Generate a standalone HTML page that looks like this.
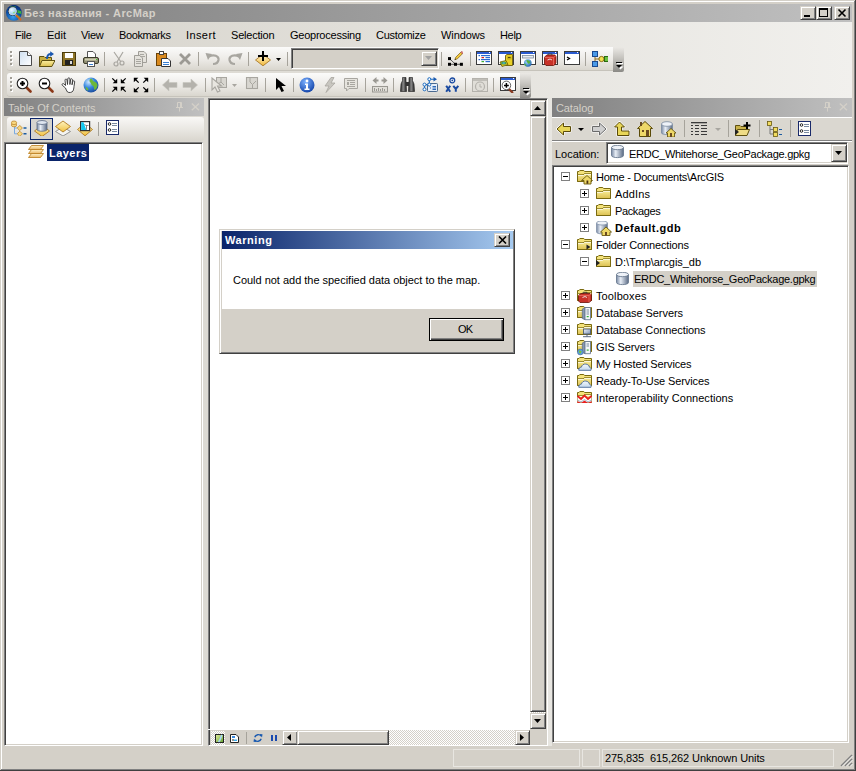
<!DOCTYPE html><html><head><meta charset="utf-8"><style>
*{margin:0;padding:0;box-sizing:border-box}
html,body{width:856px;height:771px;overflow:hidden;background:#d4d0c8;font-family:"Liberation Sans",sans-serif;font-size:11px;color:#000}
div,svg{position:absolute}
.t{white-space:nowrap;line-height:13px}
</style></head><body><svg style="left:0;top:0" width="0" height="0"><defs><linearGradient id="gfold" x1="0" y1="0" x2="0" y2="1"><stop offset="0" stop-color="#f8ec98"/><stop offset="1" stop-color="#dcc050"/></linearGradient><linearGradient id="gcyl" x1="0" x2="1"><stop offset="0" stop-color="#7a8aa4"/><stop offset="0.35" stop-color="#e8eef6"/><stop offset="1" stop-color="#5a6a84"/></linearGradient></defs></svg>
<div style="left:1px;top:1px;width:854px;height:1px;background:#fff"></div>
<div style="left:1px;top:1px;width:1px;height:768px;background:#fff"></div>
<div style="left:854px;top:1px;width:1px;height:769px;background:#808080"></div>
<div style="left:1px;top:769px;width:854px;height:1px;background:#808080"></div>
<div style="left:855px;top:0px;width:1px;height:771px;background:#404040"></div>
<div style="left:0px;top:770px;width:856px;height:1px;background:#404040"></div>
<div style="left:4px;top:22px;width:848px;height:724px;background:linear-gradient(to right,#d6d3cb,#f1f0ed)"></div>
<div style="left:4px;top:4px;width:848px;height:18px;background:linear-gradient(to right,#808080,#c0c0c0)"></div>
<svg style="left:6px;top:5px" width="16" height="16" viewBox="0 0 16 16"><defs><radialGradient id="gapp" cx="0.45" cy="0.75" r="0.75"><stop offset="0" stop-color="#3aa0f0"/><stop offset="0.6" stop-color="#0a50a8"/><stop offset="1" stop-color="#082a70"/></radialGradient><radialGradient id="glens" cx="0.35" cy="0.35" r="0.7"><stop offset="0" stop-color="#f0faff"/><stop offset="1" stop-color="#7ac0ee"/></radialGradient></defs><circle cx="7.9" cy="7.8" r="7.9" fill="url(#gapp)"/><path d="M11 5L15 6L15.5 9L11.5 8Z M10 10L14 11L13 13L10 12Z M4 1.5L10 1.5L9 2.5L5 2.5Z" fill="#38b040"/><circle cx="6.7" cy="6.2" r="4.6" fill="#1a2030"/><circle cx="6.7" cy="6.2" r="3.8" fill="url(#glens)" stroke="#e0e4e8" stroke-width="0.8"/><path d="M7 8L9 7" stroke="#9ae060" stroke-width="1"/><path d="M9.6 9.6L10.2 10.2" stroke="#eee" stroke-width="1.4"/><path d="M10.5 10.5L14.5 14.5" stroke="#d06a20" stroke-width="1.8" stroke-linecap="round"/></svg>
<div class="t" style="left:24px;top:7px;font-weight:bold;color:#d4d0c8;letter-spacing:0.391px">Без названия - ArcMap</div>
<div style="left:800px;top:6px;width:16px;height:14px;background:#d4d0c8;border-top:1px solid #d4d0c8;border-left:1px solid #d4d0c8;border-right:1px solid #404040;border-bottom:1px solid #404040;box-shadow:inset 1px 1px 0 #fff,inset -1px -1px 0 #808080"></div>
<div style="left:816px;top:6px;width:16px;height:14px;background:#d4d0c8;border-top:1px solid #d4d0c8;border-left:1px solid #d4d0c8;border-right:1px solid #404040;border-bottom:1px solid #404040;box-shadow:inset 1px 1px 0 #fff,inset -1px -1px 0 #808080"></div>
<div style="left:834px;top:6px;width:16px;height:14px;background:#d4d0c8;border-top:1px solid #d4d0c8;border-left:1px solid #d4d0c8;border-right:1px solid #404040;border-bottom:1px solid #404040;box-shadow:inset 1px 1px 0 #fff,inset -1px -1px 0 #808080"></div>
<div style="left:804px;top:15px;width:6px;height:2px;background:#000"></div>
<div style="left:819px;top:8px;width:9px;height:9px;border:1px solid #000;border-top-width:2px"></div>
<svg style="left:837px;top:8px" width="10" height="10"><path d="M1.5 1.5L8.5 8.5M8.5 1.5L1.5 8.5" stroke="#000" stroke-width="1.6"/></svg>
<div class="t" style="left:15px;top:29px;;letter-spacing:-0.296px">File</div>
<div class="t" style="left:47px;top:29px;;letter-spacing:0.009px">Edit</div>
<div class="t" style="left:81px;top:29px;;letter-spacing:-0.302px">View</div>
<div class="t" style="left:119px;top:29px;;letter-spacing:-0.392px">Bookmarks</div>
<div class="t" style="left:186px;top:29px;;letter-spacing:0.397px">Insert</div>
<div class="t" style="left:231px;top:29px;;letter-spacing:-0.208px">Selection</div>
<div class="t" style="left:290px;top:29px;;letter-spacing:-0.240px">Geoprocessing</div>
<div class="t" style="left:376px;top:29px;;letter-spacing:-0.255px">Customize</div>
<div class="t" style="left:441px;top:29px;;letter-spacing:-0.096px">Windows</div>
<div class="t" style="left:500px;top:29px;;letter-spacing:-0.321px">Help</div>
<div style="left:7px;top:47px;width:617px;height:23px;border-radius:3px;background:linear-gradient(#fbfbfa,#eceae6 55%,#d9d6ce);box-shadow:0 1px 0 #c6c3bb"></div>
<div style="left:10px;top:51px;width:2px;height:2px;background:#a09d95;box-shadow:1px 1px 0 #fff"></div>
<div style="left:10px;top:55px;width:2px;height:2px;background:#a09d95;box-shadow:1px 1px 0 #fff"></div>
<div style="left:10px;top:59px;width:2px;height:2px;background:#a09d95;box-shadow:1px 1px 0 #fff"></div>
<div style="left:10px;top:63px;width:2px;height:2px;background:#a09d95;box-shadow:1px 1px 0 #fff"></div>
<div style="left:613px;top:47px;width:11px;height:25px;border-radius:0 1px 2px 0;background:linear-gradient(#ebe9e5,#c4c2bd 45%,#8a8985)"></div>
<div style="left:616px;top:62px;width:6px;height:1px;background:#000;box-shadow:1px 1px 0 #fff"></div>
<svg style="left:616px;top:65px" width="8" height="5"><path d="M1.5 1.5H7.5L4.5 4.5Z" fill="#fff"/><path d="M0 0H6L3 3Z" fill="#000"/></svg>
<div style="left:7px;top:73px;width:524px;height:23px;border-radius:3px;background:linear-gradient(#fbfbfa,#eceae6 55%,#d9d6ce);box-shadow:0 1px 0 #c6c3bb"></div>
<div style="left:10px;top:77px;width:2px;height:2px;background:#a09d95;box-shadow:1px 1px 0 #fff"></div>
<div style="left:10px;top:81px;width:2px;height:2px;background:#a09d95;box-shadow:1px 1px 0 #fff"></div>
<div style="left:10px;top:85px;width:2px;height:2px;background:#a09d95;box-shadow:1px 1px 0 #fff"></div>
<div style="left:10px;top:89px;width:2px;height:2px;background:#a09d95;box-shadow:1px 1px 0 #fff"></div>
<div style="left:520px;top:73px;width:11px;height:25px;border-radius:0 1px 2px 0;background:linear-gradient(#ebe9e5,#c4c2bd 45%,#8a8985)"></div>
<div style="left:523px;top:88px;width:6px;height:1px;background:#000;box-shadow:1px 1px 0 #fff"></div>
<svg style="left:523px;top:91px" width="8" height="5"><path d="M1.5 1.5H7.5L4.5 4.5Z" fill="#fff"/><path d="M0 0H6L3 3Z" fill="#000"/></svg>
<div style="left:104px;top:52px;width:1px;height:14px;background:#a6a39b"></div>
<div style="left:198px;top:52px;width:1px;height:14px;background:#a6a39b"></div>
<div style="left:248px;top:52px;width:1px;height:14px;background:#a6a39b"></div>
<div style="left:287px;top:52px;width:1px;height:14px;background:#a6a39b"></div>
<div style="left:441px;top:52px;width:1px;height:14px;background:#a6a39b"></div>
<div style="left:470px;top:52px;width:1px;height:14px;background:#a6a39b"></div>
<div style="left:585px;top:52px;width:1px;height:14px;background:#a6a39b"></div>
<div style="left:104px;top:78px;width:1px;height:14px;background:#a6a39b"></div>
<div style="left:154px;top:78px;width:1px;height:14px;background:#a6a39b"></div>
<div style="left:205px;top:78px;width:1px;height:14px;background:#a6a39b"></div>
<div style="left:265px;top:78px;width:1px;height:14px;background:#a6a39b"></div>
<div style="left:293px;top:78px;width:1px;height:14px;background:#a6a39b"></div>
<div style="left:365px;top:78px;width:1px;height:14px;background:#a6a39b"></div>
<div style="left:393px;top:78px;width:1px;height:14px;background:#a6a39b"></div>
<div style="left:465px;top:78px;width:1px;height:14px;background:#a6a39b"></div>
<div style="left:493px;top:78px;width:1px;height:14px;background:#a6a39b"></div>
<svg style="left:17px;top:51px" width="16" height="16" viewBox="0 0 16 16"><defs><linearGradient id="gnew" x1="0" y1="0" x2="1" y2="1"><stop offset="0" stop-color="#cfe0f2"/><stop offset="1" stop-color="#fff"/></linearGradient></defs>
<path d="M2.5 0.5H10.5L14.5 4.5V14.5H2.5Z" fill="url(#gnew)" stroke="#4a4a4a"/><path d="M10.5 0.5V4.5H14.5" fill="#fff" stroke="#4a4a4a"/></svg>
<svg style="left:39px;top:51px" width="16" height="16" viewBox="0 0 16 16"><defs><linearGradient id="gopen" x1="0" y1="0" x2="0" y2="1"><stop offset="0" stop-color="#fbeea0"/><stop offset="1" stop-color="#dcc050"/></linearGradient></defs><path d="M0.5 5.5H5L6 6.5H12.5V15.5H0.5Z" fill="#c8ae40" stroke="#5e5010"/>
<path d="M0.5 15.5L3 9.5H16L12.8 15.5Z" fill="url(#gopen)" stroke="#5e5010"/>
<path d="M8 8C8 4.5 9.5 3 12 3" stroke="#1a58b0" stroke-width="1.8" fill="none"/><path d="M11.2 0.2L15 3L11.2 5.8Z" fill="#1a58b0"/></svg>
<svg style="left:61px;top:51px" width="16" height="16" viewBox="0 0 16 16"><rect x="1.5" y="1.5" width="13" height="13" fill="#8e7428" stroke="#4a3b0a"/>
<rect x="4" y="2" width="8" height="5" fill="#fff"/><rect x="4" y="9" width="8" height="5" fill="#222"/><rect x="9" y="10" width="2" height="3" fill="#ddd"/></svg>
<svg style="left:83px;top:51px" width="16" height="16" viewBox="0 0 16 16"><path d="M4.5 0.5H10L12.5 3V7.5H4.5Z" fill="#fff" stroke="#555"/>
<rect x="0.5" y="6.5" width="15" height="6" rx="1.5" fill="#8f8d70" stroke="#3d3c2c"/><rect x="2" y="7.5" width="12" height="2" fill="#cfcdb0"/>
<rect x="4.5" y="10.5" width="7" height="5" fill="#fff" stroke="#555"/><rect x="6" y="13" width="4" height="1" fill="#3a7fd0"/><rect x="13" y="8" width="1" height="1" fill="#3c3"/></svg>
<svg style="left:111px;top:51px" width="16" height="16" viewBox="0 0 16 16"><g stroke="#a8a6a0" fill="none" stroke-width="1.2"><path d="M3 1L10 11M12 1L6 11"/><circle cx="5" cy="13" r="2"/><circle cx="11" cy="12" r="2"/></g></svg>
<svg style="left:133px;top:51px" width="16" height="16" viewBox="0 0 16 16"><g fill="#e4e2dc" stroke="#a09e98"><path d="M5.5 0.5H11L13.5 3V11.5H5.5Z"/><path d="M1.5 4.5H7L9.5 7V15.5H1.5Z"/></g><path d="M7 3.5H11M7 5.5H12M3 8.5H8M3 10.5H8M3 12.5H8" stroke="#a8a6a0"/></svg>
<svg style="left:155px;top:51px" width="16" height="16" viewBox="0 0 16 16"><rect x="1.5" y="2.5" width="10" height="12" fill="#d98a1f" stroke="#6a4208"/><rect x="4.5" y="0.5" width="4" height="3" fill="#fff" stroke="#444"/>
<path d="M6.5 7.5H13L15.5 10V15.5H6.5Z" fill="#fff" stroke="#333"/><rect x="8" y="11" width="2" height="1" fill="#3a7fd0"/><rect x="10" y="11" width="4" height="1" fill="#3a7fd0"/><rect x="8" y="13" width="6" height="1" fill="#3a7fd0"/></svg>
<svg style="left:177px;top:51px" width="16" height="16" viewBox="0 0 16 16"><path d="M3 3L13 13M13 3L3 13" stroke="#9c9a94" stroke-width="2.8"/></svg>
<svg style="left:205px;top:51px" width="16" height="16" viewBox="0 0 16 16"><path d="M4 5.5C9 3 14 5 13.5 9C13 12 10 13 8 13" stroke="#a8a6a0" stroke-width="2.2" fill="none"/><path d="M0.5 2L7 3L3 9Z" fill="#a8a6a0"/></svg>
<svg style="left:227px;top:51px" width="16" height="16" viewBox="0 0 16 16"><path d="M12 5.5C7 3 2 5 2.5 9C3 12 6 13 8 13" stroke="#a8a6a0" stroke-width="2.2" fill="none"/><path d="M15.5 2L9 3L13 9Z" fill="#a8a6a0"/></svg>
<svg style="left:255px;top:51px" width="16" height="16" viewBox="0 0 16 16"><defs><linearGradient id="gad" x1="0" y1="0" x2="0" y2="1"><stop offset="0" stop-color="#fff6d8"/><stop offset="1" stop-color="#f0b838"/></linearGradient></defs>
<path d="M8 3.2L15.5 9L8 14.8L0.5 9Z" fill="url(#gad)" stroke="#a8782a" stroke-width="0.9"/><path d="M8 0V10M3 5H13" stroke="#000" stroke-width="2"/></svg>
<svg style="left:447px;top:51px" width="16" height="16" viewBox="0 0 16 16"><path d="M2.5 7.6L8.5 13.3M2.5 13.3H14.4" stroke="#333" stroke-width="0.8" fill="none"/><g fill="#000"><rect x="1" y="6.1" width="3" height="3"/><rect x="1" y="11.8" width="3" height="3"/><rect x="7" y="11.8" width="3" height="3"/><rect x="12.9" y="11.8" width="3" height="3"/></g><path d="M7.8 8.8L8.8 6.2L13.8 1.2L15.4 2.8L10.4 7.8Z" fill="#f2c83a" stroke="#7a5a10" stroke-width="0.7"/><path d="M13.8 1.2L14.8 0.2L16.4 1.8L15.4 2.8Z" fill="#e88080" stroke="#a04040" stroke-width="0.5"/><path d="M7.8 8.8L8.3 7.5L9.1 8.3Z" fill="#222"/></svg>
<svg style="left:476px;top:51px" width="16" height="16" viewBox="0 0 16 16"><rect x="0.5" y="0.5" width="15" height="13" fill="#fff" stroke="#3c3c3c"/><rect x="1" y="1" width="14" height="2" fill="#2a5bd0"/><rect x="13" y="1" width="1" height="1" fill="#fff"/><g fill="#2a6ad0"><rect x="2.5" y="4" width="1.5" height="1.2"/><rect x="5" y="4" width="9" height="1.2"/><rect x="2.5" y="8" width="1.5" height="1.2"/><rect x="5" y="8" width="9" height="1.2"/><rect x="9.5" y="6" width="4.5" height="1.2"/><rect x="9.5" y="10" width="4.5" height="1.2"/></g><rect x="5.5" y="6" width="2.5" height="1.2" fill="#d82020"/><rect x="5.5" y="10" width="2.5" height="1.2" fill="#40b030"/></svg>
<svg style="left:498px;top:51px" width="16" height="16" viewBox="0 0 16 16"><rect x="0.5" y="0.5" width="15" height="13" fill="#fff" stroke="#3c3c3c"/><rect x="1" y="1" width="14" height="2" fill="#2a5bd0"/><rect x="13" y="1" width="1" height="1" fill="#fff"/><path d="M7.5 4.5L9 3.5H14.5V14.5H7.5Z" fill="#e8d028" stroke="#6a5a08" stroke-width="0.9"/><path d="M9 5.5H13.5V8.5H9Z" fill="#c8b018"/><path d="M10 6.5H12.5" stroke="#5a4a08"/><path d="M2 11L8 9.5L10 13.5L4 15.5Z" fill="#e0c820" stroke="#6a5a08" stroke-width="0.8"/><ellipse cx="5.8" cy="12" rx="2.8" ry="1.6" fill="#3a9a50"/><ellipse cx="5.8" cy="12" rx="1.5" ry="0.8" fill="#5ab0e0"/></svg>
<svg style="left:520px;top:51px" width="16" height="16" viewBox="0 0 16 16"><rect x="0.5" y="0.5" width="15" height="13" fill="#fff" stroke="#3c3c3c"/><rect x="1" y="1" width="14" height="2" fill="#2a5bd0"/><rect x="13" y="1" width="1" height="1" fill="#fff"/><rect x="2.5" y="4.5" width="11" height="2.5" fill="#e6ecf2" stroke="#7a8898" stroke-width="0.8"/><defs><radialGradient id="gsg" cx="0.4" cy="0.35" r="0.7"><stop offset="0" stop-color="#a0d8ff"/><stop offset="1" stop-color="#1a60b0"/></radialGradient></defs><circle cx="7.8" cy="12" r="3.8" fill="url(#gsg)"/><path d="M6.5 9C8 8.8 9.5 9.5 10.5 11C10 12.5 9 13 8 12.5C7.5 11.5 6 10.5 6.5 9Z M5 12.5C6 13 6.5 14 6.2 15.2C5 14.8 4.3 13.8 4.2 12.7Z" fill="#58b040"/></svg>
<svg style="left:542px;top:51px" width="16" height="16" viewBox="0 0 16 16"><rect x="0.5" y="0.5" width="15" height="13" fill="#fff" stroke="#3c3c3c"/><rect x="1" y="1" width="14" height="2" fill="#2a5bd0"/><rect x="13" y="1" width="1" height="1" fill="#fff"/><path d="M2.5 6L5 4H13L14 5.5V12L12 14.5H4L2.5 13Z" fill="#c83228" stroke="#6a1208" stroke-width="0.8"/><path d="M2.5 6.5H11.5L14 4.5M11.5 6.5V14.5" stroke="#f07a6a" stroke-width="0.7" fill="none"/><path d="M5.5 9L8 8L10 9" stroke="#eee" stroke-width="0.9" fill="none"/><path d="M6 4V3H10V4" stroke="#333" fill="none" stroke-width="0.8"/></svg>
<svg style="left:564px;top:51px" width="16" height="16" viewBox="0 0 16 16"><rect x="0.5" y="0.5" width="15" height="13" fill="#fff" stroke="#3c3c3c"/><rect x="1" y="1" width="14" height="2" fill="#2a5bd0"/><rect x="13" y="1" width="1" height="1" fill="#fff"/><path d="M3 6L5.5 7.5L3 9" stroke="#000" stroke-width="1.3" fill="none"/></svg>
<svg style="left:592px;top:51px" width="16" height="16" viewBox="0 0 16 16"><path d="M3 3V13M3 8H11" stroke="#8a6a20"/><rect x="0.5" y="0.5" width="5" height="5" fill="#4a9ae8" stroke="#1a4a90"/><rect x="0.5" y="10.5" width="5" height="5" fill="#4a9ae8" stroke="#1a4a90"/><circle cx="9.5" cy="8" r="2.6" fill="#f2e050" stroke="#8a6a10"/><rect x="12.5" y="5.5" width="4" height="5" fill="#6ac040" stroke="#2a6a10"/></svg>
<svg style="left:276px;top:58px" width="6" height="3"><path d="M0 0H5L2.5 3Z" fill="#000"/></svg>
<div style="left:291px;top:48px;width:148px;height:21px;background:#d4d0c8;border-top:1px solid #808080;border-left:1px solid #808080;border-right:1px solid #fff;border-bottom:1px solid #fff;box-shadow:inset 1px 1px 0 #404040,inset -1px -1px 0 #d4d0c8"></div>
<div style="left:421px;top:51px;width:16px;height:15px;background:#d4d0c8;border-top:1px solid #d4d0c8;border-left:1px solid #d4d0c8;border-right:1px solid #404040;border-bottom:1px solid #404040;box-shadow:inset 1px 1px 0 #fff,inset -1px -1px 0 #808080"></div>
<svg style="left:425px;top:56px" width="8" height="5"><path d="M0 0H7L3.5 4Z" fill="#a0a0a0"/></svg>
<svg style="left:16px;top:77px" width="16" height="16" viewBox="0 0 16 16"><path d="M10 10L14.5 14.5" stroke="#8a3818" stroke-width="2.6" stroke-linecap="round"/><circle cx="6.5" cy="6.5" r="5.3" fill="#fff" stroke="#222" stroke-width="1.1"/><path d="M4 6.5H9" stroke="#000" stroke-width="2"/><path d="M6.5 4V9" stroke="#000" stroke-width="2"/></svg>
<svg style="left:38px;top:77px" width="16" height="16" viewBox="0 0 16 16"><path d="M10 10L14.5 14.5" stroke="#8a3818" stroke-width="2.6" stroke-linecap="round"/><circle cx="6.5" cy="6.5" r="5.3" fill="#fff" stroke="#222" stroke-width="1.1"/><path d="M4 6.5H9" stroke="#000" stroke-width="2"/></svg>
<svg style="left:61px;top:77px" width="16" height="16" viewBox="0 0 16 16"><path d="M6.5 15C5.5 14 5 12 4.5 11L1.3 8.3C0.5 7.3 1.8 6 2.8 6.8L4.6 8.5L4 3.2C3.8 1.9 5.9 1.7 6 3L6.5 7.5L6.8 1.8C6.9 0.4 8.9 0.5 8.9 1.8L8.9 7.5L9.6 2.6C9.8 1.3 11.7 1.6 11.5 2.9L11 7.8L11.8 4.5C12.1 3.3 13.9 3.6 13.7 4.9L13 9.5C12.8 11.5 12.5 13 12 14C11 15.5 8 16 6.5 15Z" fill="#fff" stroke="#333" stroke-width="0.9" stroke-linejoin="round"/></svg>
<svg style="left:83px;top:77px" width="16" height="16" viewBox="0 0 16 16"><defs><radialGradient id="ggl" cx="0.35" cy="0.3" r="0.75"><stop offset="0" stop-color="#cfe8ff"/><stop offset="0.5" stop-color="#3a8ae0"/><stop offset="1" stop-color="#1a4a9a"/></radialGradient></defs>
<circle cx="8" cy="8" r="7.5" fill="url(#ggl)"/><path d="M8 1.5C10 2.5 9.5 4 11 4.5C12.5 5 14.5 6 14.5 8.5C14 11 13 12.5 11.5 13C10.5 11 11.5 9.5 9.5 8.5C8 8 8.5 6 7 5C6 4 6.5 2.5 8 1.5Z" fill="#6cb83a"/><path d="M2.5 10C4 10 5 11 5.5 13L4 13.5C3 12.5 2.5 11 2.5 10Z" fill="#6cb83a"/></svg>
<svg style="left:111px;top:77px" width="16" height="16" viewBox="0 0 16 16"><g stroke="#000" stroke-width="1.2"><path d="M1.3 1.3L4.5 4.5M14.7 1.3L11.5 4.5M1.3 14.7L4.5 11.5M14.7 14.7L11.5 11.5"/></g><g fill="#000"><path d="M6.2 6.2V1.7L1.7 6.2Z M6.2 6.2V3H5Z"/><path d="M9.8 6.2V1.7L14.3 6.2Z"/><path d="M6.2 9.8V14.3L1.7 9.8Z"/><path d="M9.8 9.8V14.3L14.3 9.8Z"/></g></svg>
<svg style="left:133px;top:77px" width="16" height="16" viewBox="0 0 16 16"><g stroke="#000" stroke-width="1.2"><path d="M5.7 5.7L2.5 2.5M10.3 5.7L13.5 2.5M5.7 10.3L2.5 13.5M10.3 10.3L13.5 13.5"/></g><g fill="#000"><path d="M0.8 0.8H5.3L0.8 5.3Z"/><path d="M15.2 0.8H10.7L15.2 5.3Z"/><path d="M0.8 15.2H5.3L0.8 10.7Z"/><path d="M15.2 15.2H10.7L15.2 10.7Z"/></g></svg>
<svg style="left:162px;top:77px" width="16" height="16" viewBox="0 0 16 16"><path d="M0.5 8L7 2V5.5H15V10.5H7V14Z" fill="#b4b2ac" stroke="#c8c6c0" stroke-width="0.6"/></svg>
<svg style="left:182px;top:77px" width="16" height="16" viewBox="0 0 16 16"><path d="M15.5 8L9 2V5.5H1V10.5H9V14Z" fill="#b4b2ac" stroke="#c8c6c0" stroke-width="0.6"/></svg>
<svg style="left:211px;top:77px" width="16" height="16" viewBox="0 0 16 16"><rect x="5.5" y="0.5" width="10" height="10" fill="#d8d6d0" stroke="#a8a6a0"/><path d="M10 1V5L13 8M10 5L7 7" stroke="#a8a6a0" fill="none"/><path d="M1 1L1 13L4 10L6.5 15L9 14L6.5 9H10.5Z" fill="#e8e6e0" stroke="#a8a6a0" stroke-width="1.1"/></svg>
<svg style="left:245px;top:77px" width="16" height="16" viewBox="0 0 16 16"><rect x="1.5" y="0.5" width="11" height="11" fill="#d8d6d0" stroke="#a8a6a0" stroke-width="1.1"/><path d="M5 1V5L7.5 7.5V11M7.5 7.5L11 4" stroke="#a8a6a0" fill="none"/></svg>
<svg style="left:273px;top:77px" width="16" height="16" viewBox="0 0 16 16"><path d="M3 1V13L6 10L8.5 15L11 14L8.5 9H13Z" fill="#000"/></svg>
<svg style="left:299px;top:77px" width="16" height="16" viewBox="0 0 16 16"><defs><radialGradient id="gid" cx="0.4" cy="0.3" r="0.8"><stop offset="0" stop-color="#7ab0ff"/><stop offset="1" stop-color="#0a3aa0"/></radialGradient></defs><circle cx="8" cy="8" r="7.5" fill="url(#gid)"/><circle cx="8" cy="4" r="1.4" fill="#fff"/><path d="M6 6.5H9V11.5H10.5V13H5.5V11.5H7V8H6Z" fill="#fff"/></svg>
<svg style="left:322px;top:77px" width="16" height="16" viewBox="0 0 16 16"><path d="M9 0.5L3 9H7L4 15.5L13 6H9L12 0.5Z" fill="#c8c6c0" stroke="#a8a6a0" stroke-width="0.8"/></svg>
<svg style="left:343px;top:77px" width="16" height="16" viewBox="0 0 16 16"><path d="M1.5 1.5H14.5V11.5H6L3.5 14V11.5H1.5Z" fill="#e6e4de" stroke="#a8a6a0"/><rect x="4" y="5" width="2" height="3" fill="#a8a6a0"/><path d="M4 3.5H12M7 5.5H12M7 7.5H12M4 9.5H12" stroke="#a8a6a0"/></svg>
<svg style="left:372px;top:77px" width="16" height="16" viewBox="0 0 16 16"><path d="M3 3.5H6.5M9.5 3.5H13" stroke="#9a9892" stroke-width="2"/><path d="M0.5 3.5L4.5 0V7Z M15.5 3.5L11.5 0V7Z" fill="#9a9892"/><rect x="0.5" y="9.5" width="15" height="5.5" fill="#e0ded8" stroke="#9a9892"/><path d="M2.5 11V14M4.5 12V14M6.5 11V14M8.5 12V14M10.5 11V14M12.5 12V14" stroke="#9a9892" stroke-width="1"/></svg>
<svg style="left:400px;top:77px" width="16" height="16" viewBox="0 0 16 16"><defs><linearGradient id="gbin" x1="0" x2="1"><stop offset="0" stop-color="#222"/><stop offset="0.45" stop-color="#8a8a8a"/><stop offset="1" stop-color="#222"/></linearGradient></defs><g fill="url(#gbin)" stroke="#1a1a1a" stroke-width="0.6"><path d="M2.5 0.5H6V3.5L6.5 14.5H0.5L1 7L2.5 3.5Z"/><path d="M9 0.5H12.5V3.5L14 7L14.5 14.5H8.5L9 3.5Z"/></g><rect x="6" y="5" width="3" height="4" fill="#333"/></svg>
<svg style="left:422px;top:77px" width="16" height="16" viewBox="0 0 16 16"><path d="M2.5 7.6H7.3V2.2H12M2.5 7.6V12.3" stroke="#1a6ac0" stroke-width="1.1" fill="none"/><path d="M11.5 0L15 2.2L11.5 4.4Z" fill="#1a5ab0"/><rect x="5.5" y="6.5" width="10" height="8" rx="0.8" fill="#e6eef8" stroke="#4a6a90"/><g fill="#fff" stroke="#1a6ac0" stroke-width="1"><circle cx="7.3" cy="2.2" r="1.5"/><circle cx="2.5" cy="7.6" r="1.5"/><circle cx="7.3" cy="7.6" r="1.5"/><circle cx="2.5" cy="12.3" r="1.5"/></g><path d="M8 11H9M10.5 9.5H14M10.5 11H14M10.5 12.5H14" stroke="#1a5ab0" stroke-width="0.9"/></svg>
<svg style="left:444px;top:77px" width="16" height="16" viewBox="0 0 16 16"><circle cx="8.3" cy="3.4" r="2.4" fill="#fff" stroke="#1a4aa0" stroke-width="1.3"/><circle cx="8.3" cy="3.4" r="0.9" fill="#1a4aa0"/><path d="M2.2 8.8L6.2 14.8M6.2 8.8L2.2 14.8M9.3 8.8L11.8 11.9L14.3 8.8M11.8 11.9V14.8" stroke="#1a4aa0" stroke-width="2" fill="none"/></svg>
<svg style="left:472px;top:77px" width="16" height="16" viewBox="0 0 16 16"><rect x="0.5" y="1.5" width="15" height="13" fill="#e0ded8" stroke="#b4b2ac"/><rect x="1" y="2" width="14" height="2" fill="#c0beb8"/><circle cx="8" cy="9.5" r="4.5" fill="none" stroke="#b4b2ac" stroke-width="1.2"/><path d="M8 7V10H10" stroke="#b4b2ac" fill="none"/></svg>
<svg style="left:500px;top:77px" width="16" height="16" viewBox="0 0 16 16"><rect x="0.5" y="0.5" width="15" height="13" fill="#fff" stroke="#3c3c3c"/><rect x="1" y="1" width="14" height="2" fill="#2a5bd0"/><rect x="13" y="1" width="1" height="1" fill="#fff"/><path d="M9 12.2L12.3 15.3" stroke="#8a3a20" stroke-width="2.3" stroke-linecap="round"/><circle cx="6.4" cy="8.4" r="4.3" fill="#fff" stroke="#555" stroke-width="0.9"/><path d="M4 8.4H8.8M6.4 6V10.8" stroke="#000" stroke-width="1.5"/></svg>
<svg style="left:232px;top:84px" width="6" height="3"><path d="M0 0H5L2.5 3Z" fill="#a8a6a0"/></svg>
<div style="left:4px;top:98px;width:200px;height:18px;background:linear-gradient(to right,#808080,#c0c0c0)"></div>
<div class="t" style="left:8px;top:102px;color:#d4d0c8;letter-spacing:-0.028px">Table Of Contents</div>
<svg style="left:176px;top:102px" width="8" height="10"><path d="M1.5 0.5V5.5M5.5 0.5V5.5M1.5 0.5H5.5M0 5.5H7M3.5 5.5V9.5" stroke="#d4d0c8" fill="none"/><path d="M4.5 1V5" stroke="#d4d0c8"/></svg>
<svg style="left:191px;top:103px" width="9" height="8"><path d="M0.8 0.5L8 7.3M8 0.5L0.8 7.3" stroke="#d4d0c8" stroke-width="1.3" fill="none"/></svg>
<div style="left:7px;top:117px;width:197px;height:24px;border-radius:3px;background:linear-gradient(#f9f8f6,#e8e6e1 55%,#d9d6ce)"></div>
<div style="left:30px;top:118px;width:23px;height:22px;background:#d6d4cf;border:1px solid #0a246a"></div>
<div style="left:98px;top:122px;width:1px;height:14px;background:#a6a39b"></div>
<svg style="left:11px;top:120px" width="16" height="16" viewBox="0 0 16 16"><path d="M3.5 6.5V13.8H6M3.5 8H6" stroke="#7aaae0" stroke-width="1" fill="none"/><g fill="#f8d880" stroke="#c08a30" stroke-width="0.8"><ellipse cx="3" cy="5" rx="2.7" ry="1.8"/><ellipse cx="3" cy="2.8" rx="2.7" ry="1.8"/><path d="M8.8 5.4L11.4 8L8.8 10.6L6.2 8Z"/><path d="M8.8 11.2L11.4 13.8L8.8 16.4L6.2 13.8Z"/></g><path d="M12.5 8H15.5M12.5 13.8H15.5" stroke="#1a5aa0" stroke-width="1.5"/></svg>
<svg style="left:34px;top:120px" width="16" height="16" viewBox="0 0 16 16"><path d="M8 5L15.5 11L8 16.5L0.5 11Z" fill="url(#gdia)" stroke="#b07a20" stroke-width="0.9"/><path d="M3 2.5V9.5C3 11.8 13 11.8 13 9.5V2.5" fill="url(#gcyl)" stroke="#5a6a84" stroke-width="0.8"/><ellipse cx="8" cy="2.5" rx="5" ry="2" fill="#dfe6f0" stroke="#5a6a84" stroke-width="0.8"/></svg>
<svg style="left:55px;top:120px" width="16" height="16" viewBox="0 0 16 16"><path d="M8 7L15.5 11.5L8 16L0.5 11.5Z" fill="#f4f4f2" stroke="#8a8a88" stroke-width="0.9"/><path d="M8 1L15.5 6.5L8 12L0.5 6.5Z" fill="url(#gdia)" stroke="#b07a20" stroke-width="0.9"/></svg>
<svg style="left:77px;top:120px" width="16" height="16" viewBox="0 0 16 16"><defs><linearGradient id="gdia" x1="0" y1="0" x2="0" y2="1"><stop offset="0" stop-color="#fff4c0"/><stop offset="1" stop-color="#f0c040"/></linearGradient></defs><path d="M8 3L15.5 9.5L8 15.8L0.5 9.5Z" fill="url(#gdia)" stroke="#b07a20" stroke-width="0.9"/><rect x="3.6" y="1.6" width="9" height="9" fill="#fff" stroke="#303030" stroke-width="1.2"/><path d="M4.2 2.2H6.5L9.3 9.9H4.2Z" fill="#10c8f0"/><path d="M7.5 4.5L9 5.5H11.5M9.5 5.5V9.8" stroke="#555" stroke-width="0.7" fill="none"/></svg>
<svg style="left:105px;top:120px" width="16" height="16" viewBox="0 0 16 16"><rect x="1.5" y="0.5" width="12" height="14" fill="#fff" stroke="#1a2a6a"/><circle cx="4.5" cy="4" r="1.3" fill="none" stroke="#222"/><circle cx="4.5" cy="10" r="1.3" fill="none" stroke="#222"/><path d="M7 3.5H12M7 5.5H12M7 9.5H12M7 11.5H12" stroke="#7a8aa0"/></svg>
<div style="left:4px;top:142px;width:199px;height:604px;background:#fff;border-top:1px solid #808080;border-left:1px solid #808080;border-right:1px solid #fff;border-bottom:1px solid #fff;box-shadow:inset 1px 1px 0 #404040,inset -1px -1px 0 #d4d0c8"></div>
<svg style="left:28px;top:144px" width="16" height="16" viewBox="0 0 16 16"><defs><linearGradient id="glay" x1="0" y1="0" x2="0" y2="1"><stop offset="0" stop-color="#fff2c8"/><stop offset="1" stop-color="#eab868"/></linearGradient></defs><g fill="url(#glay)" stroke="#c0862a" stroke-width="0.9"><path d="M3.5 9.5H15.5L12.5 13.5H0.5Z"/><path d="M3.5 5.5H15.5L12.5 9.5H0.5Z"/><path d="M3.5 1.5H15.5L12.5 5.5H0.5Z"/></g></svg>
<div style="left:47px;top:144px;width:42px;height:17px;background:#0a246a"></div>
<div class="t" style="left:49px;top:147px;font-weight:bold;color:#fff;letter-spacing:0.457px">Layers</div>
<div style="left:208px;top:98px;width:340px;height:648px;background:#fff;border-top:1px solid #808080;border-left:1px solid #808080;border-right:1px solid #fff;border-bottom:1px solid #fff;box-shadow:inset 1px 1px 0 #404040,inset -1px -1px 0 #d4d0c8"></div>
<div style="left:530px;top:100px;width:16px;height:629px;background:repeating-conic-gradient(#d4d0c8 0 25%,#fff 0 50%) 0 0/2px 2px"></div>
<div style="left:530px;top:100px;width:16px;height:16px;background:#d4d0c8;border-top:1px solid #d4d0c8;border-left:1px solid #d4d0c8;border-right:1px solid #404040;border-bottom:1px solid #404040;box-shadow:inset 1px 1px 0 #fff,inset -1px -1px 0 #808080"></div>
<svg style="left:534px;top:106px" width="7" height="4"><path d="M3.5 0L7 4H0Z" fill="#000"/></svg>
<div style="left:530px;top:116px;width:16px;height:596px;background:#d4d0c8;border-top:1px solid #d4d0c8;border-left:1px solid #d4d0c8;border-right:1px solid #404040;border-bottom:1px solid #404040;box-shadow:inset 1px 1px 0 #fff,inset -1px -1px 0 #808080"></div>
<div style="left:530px;top:713px;width:16px;height:16px;background:#d4d0c8;border-top:1px solid #d4d0c8;border-left:1px solid #d4d0c8;border-right:1px solid #404040;border-bottom:1px solid #404040;box-shadow:inset 1px 1px 0 #fff,inset -1px -1px 0 #808080"></div>
<svg style="left:534px;top:719px" width="7" height="4"><path d="M0 0H7L3.5 4Z" fill="#000"/></svg>
<div style="left:210px;top:729px;width:321px;height:16px;background:#d4d0c8"></div>
<div style="left:208px;top:729px;width:338px;height:1px;background:#fff"></div>
<div style="left:530px;top:729px;width:16px;height:16px;background:#d4d0c8"></div>
<div style="left:211px;top:731px;width:14px;height:14px;background:repeating-conic-gradient(#d4d0c8 0 25%,#fff 0 50%) 0 0/2px 2px"></div>
<svg style="left:215px;top:734px" width="10" height="10" viewBox="0 0 10 10"><defs><linearGradient id="gdv" x1="0" y1="0" x2="1" y2="1"><stop offset="0" stop-color="#e8f0a0"/><stop offset="1" stop-color="#60a030"/></linearGradient></defs><rect x="0.5" y="0.5" width="8" height="8" fill="url(#gdv)" stroke="#222"/><path d="M7 1C5.5 3 6 5 3.5 8" stroke="#a8d8f8" stroke-width="1.6" fill="none"/></svg>
<svg style="left:230px;top:734px" width="10" height="10" viewBox="0 0 10 10"><path d="M0.5 0.5H6L8.5 3V8.5H0.5Z" fill="#fff" stroke="#222"/><rect x="2" y="2" width="3" height="2" fill="#3a8ae0"/><rect x="2" y="5.5" width="2" height="1" fill="#222"/><rect x="4" y="5.5" width="3" height="1.5" fill="#3ab0f0"/></svg>
<div style="left:246px;top:732px;width:1px;height:12px;background:#a6a39b"></div>
<svg style="left:253px;top:733px" width="10" height="10" viewBox="0 0 10 10"><path d="M1.8 4.2A3.6 3.6 0 0 1 8.2 3.2M8.2 5.8A3.6 3.6 0 0 1 1.8 6.8" stroke="#1a5ab0" stroke-width="1.4" fill="none"/><path d="M6.5 1L9.5 1.2L9 4.5Z M3.5 9L0.5 8.8L1 5.5Z" fill="#1a5ab0"/></svg>
<svg style="left:271px;top:735px" width="6" height="6" viewBox="0 0 6 6"><rect x="0" y="0" width="2" height="6" fill="#1a4ab0"/><rect x="4" y="0" width="2" height="6" fill="#1a4ab0"/></svg>
<div style="left:297px;top:730px;width:218px;height:15px;background:repeating-conic-gradient(#d4d0c8 0 25%,#fff 0 50%) 0 0/2px 2px"></div>
<div style="left:282px;top:730px;width:16px;height:15px;background:#d4d0c8;border-top:1px solid #d4d0c8;border-left:1px solid #d4d0c8;border-right:1px solid #404040;border-bottom:1px solid #404040;box-shadow:inset 1px 1px 0 #fff,inset -1px -1px 0 #808080"></div>
<svg style="left:287px;top:734px" width="4" height="7"><path d="M4 0V7L0 3.5Z" fill="#000"/></svg>
<div style="left:297px;top:730px;width:92px;height:15px;background:#d4d0c8;border-top:1px solid #d4d0c8;border-left:1px solid #d4d0c8;border-right:1px solid #404040;border-bottom:1px solid #404040;box-shadow:inset 1px 1px 0 #fff,inset -1px -1px 0 #808080"></div>
<div style="left:515px;top:730px;width:15px;height:15px;background:#d4d0c8;border-top:1px solid #d4d0c8;border-left:1px solid #d4d0c8;border-right:1px solid #404040;border-bottom:1px solid #404040;box-shadow:inset 1px 1px 0 #fff,inset -1px -1px 0 #808080"></div>
<svg style="left:520px;top:734px" width="4" height="7"><path d="M0 0V7L4 3.5Z" fill="#000"/></svg>
<div style="left:552px;top:98px;width:300px;height:648px;background:#d4d0c8"></div>
<div style="left:552px;top:98px;width:300px;height:19px;background:linear-gradient(to right,#808080,#c0c0c0)"></div>
<div class="t" style="left:556px;top:102px;color:#d4d0c8;letter-spacing:-0.096px">Catalog</div>
<svg style="left:824px;top:102px" width="8" height="10"><path d="M1.5 0.5V5.5M5.5 0.5V5.5M1.5 0.5H5.5M0 5.5H7M3.5 5.5V9.5" stroke="#d4d0c8" fill="none"/><path d="M4.5 1V5" stroke="#d4d0c8"/></svg>
<svg style="left:839px;top:103px" width="9" height="8"><path d="M0.8 0.5L8 7.3M8 0.5L0.8 7.3" stroke="#d4d0c8" stroke-width="1.3" fill="none"/></svg>
<div style="left:552px;top:117px;width:300px;height:1px;background:#fff"></div>
<div style="left:552px;top:118px;width:300px;height:22px;background:#dad7d0"></div>
<div style="left:552px;top:140px;width:300px;height:1px;background:#808080"></div>
<div style="left:552px;top:141px;width:300px;height:1px;background:#fff"></div>
<div style="left:552px;top:142px;width:300px;height:23px;background:#d4d0c8"></div>
<div style="left:684px;top:120px;width:1px;height:17px;background:#a6a39b"></div>
<div style="left:728px;top:120px;width:1px;height:17px;background:#a6a39b"></div>
<div style="left:759px;top:120px;width:1px;height:17px;background:#a6a39b"></div>
<div style="left:790px;top:120px;width:1px;height:17px;background:#a6a39b"></div>
<svg style="left:556px;top:121px" width="16" height="16" viewBox="0 0 16 16"><path d="M1 8L7.5 2V5.5H14.5V10.5H7.5V14Z" fill="#efe070" stroke="#fff" stroke-width="2" stroke-linejoin="round"/><path d="M1 8L7.5 2V5.5H14.5V10.5H7.5V14Z" fill="#e8d658" stroke="#5a4a08" stroke-width="1"/></svg>
<svg style="left:591px;top:121px" width="16" height="16" viewBox="0 0 16 16"><path d="M15 8L8.5 2V5.5H1.5V10.5H8.5V14Z" fill="#d8d8d8" stroke="#fff" stroke-width="2" stroke-linejoin="round"/><path d="M15 8L8.5 2V5.5H1.5V10.5H8.5V14Z" fill="#cfcfcf" stroke="#6a6a6a" stroke-width="1"/></svg>
<svg style="left:614px;top:121px" width="16" height="16" viewBox="0 0 16 16"><path d="M5.5 1L10.5 6H7.5V10H15V14.5H3.5V6H0.5Z" fill="#e8d658" stroke="#fff" stroke-width="2" stroke-linejoin="round"/><path d="M5.5 1L10.5 6H7.5V10H15V14.5H3.5V6H0.5Z" fill="#e8d658" stroke="#5a4a08"/></svg>
<svg style="left:637px;top:121px" width="16" height="16" viewBox="0 0 16 16"><path d="M8 0.5L15.5 7.5H13.5V15.5H2.5V7.5H0.5Z" fill="#eed868" stroke="#5a4a08"/><rect x="3" y="1" width="2" height="4" fill="#6a4a20"/><rect x="5" y="9" width="2" height="2" fill="#6a4a20"/><rect x="9" y="9" width="3" height="6" fill="#6a4a20"/></svg>
<svg style="left:660px;top:121px" width="16" height="16" viewBox="0 0 16 16"><path d="M1.5 3V12C1.5 14 12.5 14 12.5 12V3" fill="url(#gcyl)" stroke="#7a8aa0" stroke-width="0.8"/><ellipse cx="7" cy="3" rx="5.5" ry="2.3" fill="#eef2f8" stroke="#7a8aa0" stroke-width="0.8"/><path d="M11 7.5L16 12H14.5V16H7.5V12H6Z" fill="#eed868" stroke="#5a4a08" stroke-width="0.8"/><rect x="10" y="12" width="2" height="4" fill="#6a4a20"/></svg>
<svg style="left:691px;top:121px" width="16" height="16" viewBox="0 0 16 16"><g fill="#3a3a3a"><rect x="0" y="1" width="16" height="1.3"/><rect x="0" y="4" width="2" height="1"/><rect x="4" y="4" width="4" height="1"/><rect x="10" y="4" width="6" height="1"/><rect x="0" y="7" width="2" height="1"/><rect x="4" y="7" width="4" height="1"/><rect x="10" y="7" width="6" height="1"/><rect x="0" y="10" width="2" height="1"/><rect x="4" y="10" width="4" height="1"/><rect x="10" y="10" width="6" height="1"/><rect x="0" y="13" width="2" height="1"/><rect x="4" y="13" width="4" height="1"/><rect x="10" y="13" width="6" height="1"/></g></svg>
<svg style="left:735px;top:121px" width="16" height="16" viewBox="0 0 16 16"><path d="M0.5 4.5H5L6 5.5H11.5V14.5H0.5Z" fill="#c9b24a" stroke="#5e5010"/><path d="M0.5 14.5L2.5 8.5H14.5L12 14.5Z" fill="#efdc86" stroke="#5e5010"/><path d="M0 8L4 11L0 14Z" fill="#222"/><path d="M12 1V8M8.5 4.5H15.5" stroke="#000" stroke-width="2"/></svg>
<svg style="left:767px;top:121px" width="16" height="16" viewBox="0 0 16 16"><path d="M3 4V13H6M3 8.5H6" stroke="#7a7a7a" fill="none"/><g fill="#f2dc60" stroke="#6a5a10" stroke-width="0.8"><rect x="0.5" y="0.5" width="4" height="4"/><rect x="6.5" y="6.5" width="4" height="4"/><rect x="6.5" y="11.5" width="4" height="4"/></g><path d="M12 8.5H15M12 13.5H15" stroke="#1a5aa0" stroke-width="1.2"/></svg>
<svg style="left:797px;top:121px" width="16" height="16" viewBox="0 0 16 16"><rect x="1.5" y="0.5" width="12" height="14" fill="#fff" stroke="#1a2a6a"/><circle cx="4.5" cy="4" r="1.3" fill="none" stroke="#222"/><circle cx="4.5" cy="10" r="1.3" fill="none" stroke="#222"/><path d="M7 3.5H12M7 5.5H12M7 9.5H12M7 11.5H12" stroke="#7a8aa0"/></svg>
<svg style="left:578px;top:128px" width="7" height="4"><path d="M0 0H6L3 3Z" fill="#000"/></svg>
<svg style="left:715px;top:128px" width="7" height="4"><path d="M0 0H6L3 3Z" fill="#a8a6a0"/></svg>
<div class="t" style="left:555px;top:148px;;letter-spacing:-0.030px">Location:</div>
<div style="left:606px;top:142px;width:242px;height:22px;background:#fff;border-top:1px solid #808080;border-left:1px solid #808080;border-right:1px solid #fff;border-bottom:1px solid #fff;box-shadow:inset 1px 1px 0 #404040,inset -1px -1px 0 #d4d0c8"></div>
<svg style="left:610px;top:145px" width="16" height="16" viewBox="0 0 16 16"><path d="M1.5 2.5V10.5C1.5 13.3 13.5 13.3 13.5 10.5V2.5" fill="url(#gcyl)" stroke="#6a7a90" stroke-width="0.9"/><ellipse cx="7.5" cy="2.5" rx="6" ry="2.2" fill="#eef2f8" stroke="#6a7a90" stroke-width="0.9"/></svg>
<div style="left:831px;top:144px;width:16px;height:18px;background:#d4d0c8;border-top:1px solid #d4d0c8;border-left:1px solid #d4d0c8;border-right:1px solid #404040;border-bottom:1px solid #404040;box-shadow:inset 1px 1px 0 #fff,inset -1px -1px 0 #808080"></div>
<svg style="left:835px;top:151px" width="7" height="4"><path d="M0 0H7L3.5 4Z" fill="#000"/></svg>
<div class="t" style="left:629px;top:148px;;letter-spacing:-0.280px">ERDC_Whitehorse_GeoPackage.gpkg</div>
<div style="left:552px;top:165px;width:297px;height:578px;background:#fff;border-top:1px solid #808080;border-left:1px solid #808080;border-right:1px solid #fff;border-bottom:1px solid #fff;box-shadow:inset 1px 1px 0 #404040,inset -1px -1px 0 #d4d0c8"></div>
<div style="left:561px;top:172px;width:9px;height:9px;background:#fff;border:1px solid #808080"></div>
<div style="left:563px;top:176px;width:5px;height:1px;background:#000"></div>
<svg style="left:577px;top:170px" width="16" height="16" viewBox="0 0 16 16"><path d="M0.5 1.5H2L2.8 0.5H6.8L7.6 1.5H14.5V11.5H0.5Z" fill="#f4e27a" stroke="#7a6a10"/><path d="M0.5 11.5V4.8H6.2L7.2 3.8H14.5V11.5Z" fill="url(#gfold)" stroke="#7a6a10"/><path d="M1 5.5H6.5L7.5 4.5H14" stroke="#fffce8" stroke-width="0.9" fill="none"/><path d="M10 5.5L15.5 10.5H14V14H7V10.5H4.5Z" fill="#eed868" stroke="#6a5a10" stroke-width="0.9"/><rect x="9.5" y="10.5" width="1.8" height="3.2" fill="#4a3010"/></svg>
<div class="t" style="left:596px;top:171px;;letter-spacing:-0.234px">Home - Documents\ArcGIS</div>
<div style="left:580px;top:189px;width:9px;height:9px;background:#fff;border:1px solid #808080"></div>
<div style="left:582px;top:193px;width:5px;height:1px;background:#000"></div>
<div style="left:584px;top:191px;width:1px;height:5px;background:#000"></div>
<svg style="left:596px;top:187px" width="16" height="16" viewBox="0 0 16 16"><path d="M0.5 1.5H2L2.8 0.5H6.8L7.6 1.5H14.5V11.5H0.5Z" fill="#f4e27a" stroke="#7a6a10"/><path d="M0.5 11.5V4.8H6.2L7.2 3.8H14.5V11.5Z" fill="url(#gfold)" stroke="#7a6a10"/><path d="M1 5.5H6.5L7.5 4.5H14" stroke="#fffce8" stroke-width="0.9" fill="none"/></svg>
<div class="t" style="left:615px;top:188px;;letter-spacing:0.136px">AddIns</div>
<div style="left:580px;top:206px;width:9px;height:9px;background:#fff;border:1px solid #808080"></div>
<div style="left:582px;top:210px;width:5px;height:1px;background:#000"></div>
<div style="left:584px;top:208px;width:1px;height:5px;background:#000"></div>
<svg style="left:596px;top:204px" width="16" height="16" viewBox="0 0 16 16"><path d="M0.5 1.5H2L2.8 0.5H6.8L7.6 1.5H14.5V11.5H0.5Z" fill="#f4e27a" stroke="#7a6a10"/><path d="M0.5 11.5V4.8H6.2L7.2 3.8H14.5V11.5Z" fill="url(#gfold)" stroke="#7a6a10"/><path d="M1 5.5H6.5L7.5 4.5H14" stroke="#fffce8" stroke-width="0.9" fill="none"/></svg>
<div class="t" style="left:615px;top:205px;;letter-spacing:-0.362px">Packages</div>
<div style="left:580px;top:223px;width:9px;height:9px;background:#fff;border:1px solid #808080"></div>
<div style="left:582px;top:227px;width:5px;height:1px;background:#000"></div>
<div style="left:584px;top:225px;width:1px;height:5px;background:#000"></div>
<svg style="left:596px;top:221px" width="16" height="16" viewBox="0 0 16 16"><path d="M0.5 2V11C0.5 13.5 11.5 13.5 11.5 11V2" fill="url(#gcyl)" stroke="#8090a8" stroke-width="0.8"/><ellipse cx="6" cy="2" rx="5.5" ry="2" fill="#eef2f8" stroke="#8090a8" stroke-width="0.8"/><path d="M10 6L15.5 11H14V14.5H6V11H4.5Z" fill="#eed868" stroke="#6a5a10" stroke-width="0.9"/><rect x="9" y="11" width="2" height="3.5" fill="#6a4a20"/></svg>
<div class="t" style="left:615px;top:222px;font-weight:bold;letter-spacing:0.524px">Default.gdb</div>
<div style="left:561px;top:240px;width:9px;height:9px;background:#fff;border:1px solid #808080"></div>
<div style="left:563px;top:244px;width:5px;height:1px;background:#000"></div>
<svg style="left:577px;top:238px" width="16" height="16" viewBox="0 0 16 16"><path d="M0.5 1.5H2L2.8 0.5H6.8L7.6 1.5H14.5V11.5H0.5Z" fill="#f4e27a" stroke="#7a6a10"/><path d="M0.5 11.5V4.8H6.2L7.2 3.8H14.5V11.5Z" fill="url(#gfold)" stroke="#7a6a10"/><path d="M1 5.5H6.5L7.5 4.5H14" stroke="#fffce8" stroke-width="0.9" fill="none"/><path d="M9.5 6.5L13.5 9L9.5 11.5Z" fill="#222"/></svg>
<div class="t" style="left:596px;top:239px;;letter-spacing:-0.137px">Folder Connections</div>
<div style="left:580px;top:257px;width:9px;height:9px;background:#fff;border:1px solid #808080"></div>
<div style="left:582px;top:261px;width:5px;height:1px;background:#000"></div>
<svg style="left:596px;top:255px" width="16" height="16" viewBox="0 0 16 16"><path d="M0.5 1.5H2L2.8 0.5H6.8L7.6 1.5H14.5V11.5H0.5Z" fill="#f4e27a" stroke="#7a6a10"/><path d="M0.5 11.5V4.8H6.2L7.2 3.8H14.5V11.5Z" fill="url(#gfold)" stroke="#7a6a10"/><path d="M1 5.5H6.5L7.5 4.5H14" stroke="#fffce8" stroke-width="0.9" fill="none"/><path d="M0 5L4 8L0 11Z" fill="#222"/></svg>
<div class="t" style="left:615px;top:256px;;letter-spacing:-0.052px">D:\Tmp\arcgis_db</div>
<svg style="left:615px;top:272px" width="16" height="16" viewBox="0 0 16 16"><path d="M1.5 2.5V10.5C1.5 13.3 13.5 13.3 13.5 10.5V2.5" fill="url(#gcyl)" stroke="#6a7a90" stroke-width="0.9"/><ellipse cx="7.5" cy="2.5" rx="6" ry="2.2" fill="#eef2f8" stroke="#6a7a90" stroke-width="0.9"/></svg>
<div style="left:633px;top:271px;width:184px;height:16px;background:#d4d0c8"></div>
<div class="t" style="left:634px;top:273px;;letter-spacing:-0.261px">ERDC_Whitehorse_GeoPackage.gpkg</div>
<div style="left:561px;top:291px;width:9px;height:9px;background:#fff;border:1px solid #808080"></div>
<div style="left:563px;top:295px;width:5px;height:1px;background:#000"></div>
<div style="left:565px;top:293px;width:1px;height:5px;background:#000"></div>
<svg style="left:577px;top:289px" width="16" height="16" viewBox="0 0 16 16"><path d="M0.5 1.5H2L2.8 0.5H6.8L7.6 1.5H14.5V11.5H0.5Z" fill="#f4e27a" stroke="#7a6a10"/><path d="M0.5 11.5V4.8H6.2L7.2 3.8H14.5V11.5Z" fill="url(#gfold)" stroke="#7a6a10"/><path d="M1 5.5H6.5L7.5 4.5H14" stroke="#fffce8" stroke-width="0.9" fill="none"/><path d="M1.5 6.5L4 4.5H13L14.5 6V11.5L12 13.5H3L1.5 12Z" fill="#c83228" stroke="#6a1208" stroke-width="0.8"/><path d="M1.5 6.5H12L14.5 4.5M12 6.5V13.5" stroke="#f07a6a" stroke-width="0.7" fill="none"/><path d="M5.5 8.5L8 7.5L10 8.5" stroke="#eee" stroke-width="0.9" fill="none"/><path d="M6 4.5V3.3H10V4.5" stroke="#333" fill="none" stroke-width="0.8"/></svg>
<div class="t" style="left:596px;top:290px;;letter-spacing:0.112px">Toolboxes</div>
<div style="left:561px;top:308px;width:9px;height:9px;background:#fff;border:1px solid #808080"></div>
<div style="left:563px;top:312px;width:5px;height:1px;background:#000"></div>
<div style="left:565px;top:310px;width:1px;height:5px;background:#000"></div>
<svg style="left:577px;top:306px" width="16" height="16" viewBox="0 0 16 16"><path d="M0.5 1.5H2L2.8 0.5H6.8L7.6 1.5H14.5V11.5H0.5Z" fill="#f4e27a" stroke="#7a6a10"/><path d="M0.5 11.5V4.8H6.2L7.2 3.8H14.5V11.5Z" fill="url(#gfold)" stroke="#7a6a10"/><path d="M1 5.5H6.5L7.5 4.5H14" stroke="#fffce8" stroke-width="0.9" fill="none"/><path d="M5.3 3L8 1.5V13.7L5.3 12.5Z" fill="#8898b0" stroke="#5a6a84" stroke-width="0.7"/><path d="M8 1.5H13.5V13.7H8Z" fill="#f4f6f8" stroke="#6a7a94" stroke-width="0.9"/><path d="M9.5 4H12M9.5 6H12M9.5 8H12" stroke="#7a8aa0"/><rect x="9.7" y="10" width="2" height="1.2" fill="#30b030"/></svg>
<div class="t" style="left:596px;top:307px;;letter-spacing:-0.068px">Database Servers</div>
<div style="left:561px;top:325px;width:9px;height:9px;background:#fff;border:1px solid #808080"></div>
<div style="left:563px;top:329px;width:5px;height:1px;background:#000"></div>
<div style="left:565px;top:327px;width:1px;height:5px;background:#000"></div>
<svg style="left:577px;top:323px" width="16" height="16" viewBox="0 0 16 16"><path d="M0.5 1.5H2L2.8 0.5H6.8L7.6 1.5H14.5V11.5H0.5Z" fill="#f4e27a" stroke="#7a6a10"/><path d="M0.5 11.5V4.8H6.2L7.2 3.8H14.5V11.5Z" fill="url(#gfold)" stroke="#7a6a10"/><path d="M1 5.5H6.5L7.5 4.5H14" stroke="#fffce8" stroke-width="0.9" fill="none"/><defs><linearGradient id="gmon" x1="0" y1="0" x2="1" y2="1"><stop offset="0" stop-color="#f0f4fa"/><stop offset="1" stop-color="#7a90b0"/></linearGradient></defs><rect x="6.5" y="6" width="7" height="5" fill="url(#gmon)" stroke="#4a5a74" stroke-width="0.9"/><path d="M10 11V13.5M6 13.7H14" stroke="#4a5a74" stroke-width="0.9"/></svg>
<div class="t" style="left:596px;top:324px;;letter-spacing:-0.092px">Database Connections</div>
<div style="left:561px;top:342px;width:9px;height:9px;background:#fff;border:1px solid #808080"></div>
<div style="left:563px;top:346px;width:5px;height:1px;background:#000"></div>
<div style="left:565px;top:344px;width:1px;height:5px;background:#000"></div>
<svg style="left:577px;top:340px" width="16" height="16" viewBox="0 0 16 16"><path d="M0.5 1.5H2L2.8 0.5H6.8L7.6 1.5H14.5V11.5H0.5Z" fill="#f4e27a" stroke="#7a6a10"/><path d="M0.5 11.5V4.8H6.2L7.2 3.8H14.5V11.5Z" fill="url(#gfold)" stroke="#7a6a10"/><path d="M1 5.5H6.5L7.5 4.5H14" stroke="#fffce8" stroke-width="0.9" fill="none"/><path d="M5.3 3L8 1.5V13.7L5.3 12.5Z" fill="#8898b0" stroke="#5a6a84" stroke-width="0.7"/><path d="M8 1.5H13.5V13.7H8Z" fill="#f4f6f8" stroke="#6a7a94" stroke-width="0.9"/><path d="M9.5 4H12M9.5 6H12" stroke="#7a8aa0"/><rect x="9.7" y="9.5" width="2" height="1.2" fill="#30b030"/><circle cx="3.3" cy="12" r="2.9" fill="#5aa0e0" stroke="#4a6a98" stroke-width="0.6"/><path d="M2.2 10.3L4.8 11.2L3.5 13.8L1.8 12.5Z" fill="#7ac040"/></svg>
<div class="t" style="left:596px;top:341px;;letter-spacing:-0.115px">GIS Servers</div>
<div style="left:561px;top:359px;width:9px;height:9px;background:#fff;border:1px solid #808080"></div>
<div style="left:563px;top:363px;width:5px;height:1px;background:#000"></div>
<div style="left:565px;top:361px;width:1px;height:5px;background:#000"></div>
<svg style="left:577px;top:357px" width="16" height="16" viewBox="0 0 16 16"><path d="M0.5 1.5H2L2.8 0.5H6.8L7.6 1.5H14.5V11.5H0.5Z" fill="#f4e27a" stroke="#7a6a10"/><path d="M0.5 11.5V4.8H6.2L7.2 3.8H14.5V11.5Z" fill="url(#gfold)" stroke="#7a6a10"/><path d="M1 5.5H6.5L7.5 4.5H14" stroke="#fffce8" stroke-width="0.9" fill="none"/><defs><linearGradient id="gcld" x1="0" y1="0" x2="0" y2="1"><stop offset="0" stop-color="#f4f8fc"/><stop offset="1" stop-color="#c0d6ee"/></linearGradient></defs><path d="M1.8 13.3C1.3 11.5 2.8 10.2 4.3 10.2C4.8 8.2 6.8 6.7 8.8 7.1C10.8 7.2 12.3 8.6 12.4 10.1C13.9 10.6 14.5 12 14 13.3Z" fill="url(#gcld)" stroke="#4a6a98" stroke-width="0.9"/></svg>
<div class="t" style="left:596px;top:358px;;letter-spacing:-0.132px">My Hosted Services</div>
<div style="left:561px;top:376px;width:9px;height:9px;background:#fff;border:1px solid #808080"></div>
<div style="left:563px;top:380px;width:5px;height:1px;background:#000"></div>
<div style="left:565px;top:378px;width:1px;height:5px;background:#000"></div>
<svg style="left:577px;top:374px" width="16" height="16" viewBox="0 0 16 16"><path d="M0.5 1.5H2L2.8 0.5H6.8L7.6 1.5H14.5V11.5H0.5Z" fill="#f4e27a" stroke="#7a6a10"/><path d="M0.5 11.5V4.8H6.2L7.2 3.8H14.5V11.5Z" fill="url(#gfold)" stroke="#7a6a10"/><path d="M1 5.5H6.5L7.5 4.5H14" stroke="#fffce8" stroke-width="0.9" fill="none"/><defs><linearGradient id="gcld" x1="0" y1="0" x2="0" y2="1"><stop offset="0" stop-color="#f4f8fc"/><stop offset="1" stop-color="#c0d6ee"/></linearGradient></defs><path d="M1.8 13.3C1.3 11.5 2.8 10.2 4.3 10.2C4.8 8.2 6.8 6.7 8.8 7.1C10.8 7.2 12.3 8.6 12.4 10.1C13.9 10.6 14.5 12 14 13.3Z" fill="url(#gcld)" stroke="#4a6a98" stroke-width="0.9"/></svg>
<div class="t" style="left:596px;top:375px;;letter-spacing:-0.105px">Ready-To-Use Services</div>
<div style="left:561px;top:393px;width:9px;height:9px;background:#fff;border:1px solid #808080"></div>
<div style="left:563px;top:397px;width:5px;height:1px;background:#000"></div>
<div style="left:565px;top:395px;width:1px;height:5px;background:#000"></div>
<svg style="left:577px;top:391px" width="16" height="16" viewBox="0 0 16 16"><path d="M0.5 1.5H2L2.8 0.5H6.8L7.6 1.5H14.5V11.5H0.5Z" fill="#f4e27a" stroke="#7a6a10"/><path d="M0.5 11.5V4.8H6.2L7.2 3.8H14.5V11.5Z" fill="url(#gfold)" stroke="#7a6a10"/><path d="M1 5.5H6.5L7.5 4.5H14" stroke="#fffce8" stroke-width="0.9" fill="none"/><path d="M0.5 5.5L4 8.5L7.5 5L11 8.5L14.5 5.5V11.5H0.5Z" fill="#fff"/><path d="M0.5 5L4 8L7.5 4.5L11 8L14.5 5" stroke="#e82020" stroke-width="1.8" fill="none"/><path d="M0.5 9L4 11L7.5 8.5L11 11L14.5 9" stroke="#8aa0b8" stroke-width="0.8" fill="none"/><path d="M0.5 10L4 12L7.5 9.5L11 12L14.5 10V12H0.5Z" fill="#e82020"/></svg>
<div class="t" style="left:596px;top:392px;;letter-spacing:0.034px">Interoperability Connections</div>
<div style="left:219px;top:229px;width:296px;height:125px;background:#d4d0c8;border-top:1px solid #d4d0c8;border-left:1px solid #d4d0c8;border-right:1px solid #404040;border-bottom:1px solid #404040;box-shadow:inset 1px 1px 0 #fff,inset -1px -1px 0 #808080"></div>
<div style="left:222px;top:231px;width:291px;height:18px;background:linear-gradient(to right,#0a246a,#a6caf0)"></div>
<div class="t" style="left:225px;top:234px;font-weight:bold;color:#fff;letter-spacing:0.570px">Warning</div>
<div style="left:494px;top:233px;width:16px;height:14px;background:#d4d0c8;border-top:1px solid #d4d0c8;border-left:1px solid #d4d0c8;border-right:1px solid #404040;border-bottom:1px solid #404040;box-shadow:inset 1px 1px 0 #fff,inset -1px -1px 0 #808080"></div>
<svg style="left:498px;top:236px" width="9" height="8"><path d="M1 0.5L8 7.5M8 0.5L1 7.5" stroke="#000" stroke-width="1.6"/></svg>
<div style="left:222px;top:249px;width:291px;height:60px;background:#fff"></div>
<div class="t" style="left:233px;top:274px;;letter-spacing:-0.021px">Could not add the specified data object to the map.</div>
<div style="left:429px;top:318px;width:75px;height:23px;background:#d4d0c8;border:1px solid #000;box-shadow:inset 1px 1px 0 #fff,inset -1px -1px 0 #404040,inset -2px -2px 0 #808080"></div>
<div class="t" style="left:458px;top:323px;;letter-spacing:-0.737px">OK</div>
<div style="left:453px;top:749px;width:127px;height:18px;border:1px solid #e8e6e1"></div>
<div style="left:582px;top:749px;width:18px;height:18px;border:1px solid #e8e6e1"></div>
<div style="left:602px;top:749px;width:232px;height:18px;border:1px solid #e8e6e1"></div>
<div class="t" style="left:605px;top:752px;;letter-spacing:-0.097px">275,835&nbsp; 615,262 Unknown Units</div>
<svg style="left:840px;top:754px" width="13" height="13"><path d="M12 1L1 12M12 5L5 12M12 9L9 12" stroke="#808080" stroke-width="1.5"/><path d="M12.5 2L2 12.5M12.5 6L6 12.5M12.5 10L10 12.5" stroke="#fff" stroke-width="0.8"/></svg></body></html>
